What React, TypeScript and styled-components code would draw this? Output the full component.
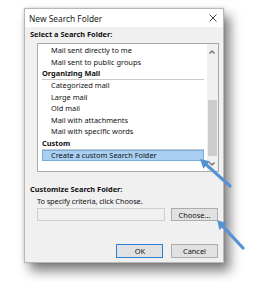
import React from "react";
import styled, { createGlobalStyle } from "styled-components";

const Global = createGlobalStyle`
  html, body { margin: 0; padding: 0; background: #ffffff; }
  body { font-family: "Noto Sans", "Open Sans", sans-serif; }
`;

const Page = styled.div`
  position: relative;
  width: 253px;
  height: 282px;
  padding: 8px 0 0 24px;
  box-sizing: border-box;
  overflow: hidden;
`;

const Dialog = styled.div`
  width: 200px;
  height: 255px;
  box-sizing: border-box;
  border: 1px solid #b8b8b8;
  background: #f0f0f0;
  box-shadow: 0 0 3px rgba(0, 0, 0, 0.18), 6px 8px 11px rgba(0, 0, 0, 0.5);
  display: flex;
  flex-direction: column;
  font-size: 7.4px;
  color: #111;
`;

const TitleBar = styled.div`
  height: 18px;
  background: #ffffff;
  display: flex;
  align-items: center;
  justify-content: space-between;
  padding: 0 4px 0 4px;
  font-size: 8.4px;
  color: #1a1a1a;
`;

const Close = styled.svg`
  width: 8px;
  height: 8px;
  margin-right: 2px;
`;

const Body = styled.div`
  flex: 1;
  display: flex;
  flex-direction: column;
  padding: 2px 4px 0 5px;
`;

const Label = styled.div<{ $mt?: number }>`
  font-weight: 700;
  height: 10px;
  line-height: 10px;
  margin-top: ${(p) => p.$mt ?? 0}px;
  color: #111;
`;

const Hint = styled.div`
  height: 10px;
  line-height: 10px;
  margin: 2px 0 0 7px;
  letter-spacing: -0.1px;
`;

const ListBox = styled.div`
  margin: 4px 0 0 7px;
  height: 129px;
  box-sizing: border-box;
  border: 1px solid #a9a9a9;
  background: #ffffff;
  display: flex;
  overflow: hidden;
`;

const Items = styled.div`
  flex: 1;
  padding: 1.3px 3px 0 4px;
  display: flex;
  flex-direction: column;
`;

const Row = styled.div<{ $kind: "item" | "header" | "selected" }>`
  height: 11.6px;
  line-height: 11px;
  box-sizing: border-box;
  padding-left: ${(p) => (p.$kind === "header" ? 0 : 9)}px;
  font-weight: ${(p) => (p.$kind === "header" ? 700 : 400)};
  border-bottom: ${(p) => (p.$kind === "header" ? "1px solid #c9c9c9" : "none")};
  background: ${(p) => (p.$kind === "selected" ? "#a9d0f2" : "transparent")};
  outline: ${(p) => (p.$kind === "selected" ? "1px solid #78aedd" : "none")};
  outline-offset: -1px;
  white-space: nowrap;
`;

const ScrollBar = styled.div`
  width: 11.5px;
  background: #f0f0f0;
  display: flex;
  flex-direction: column;
  align-items: stretch;
`;

const ScrollBtn = styled.div`
  height: 15px;
  display: flex;
  align-items: center;
  justify-content: center;
`;

const Track = styled.div`
  flex: 1;
  display: flex;
  flex-direction: column;
  padding: 41px 1px 0 1px;
`;

const Thumb = styled.div`
  flex: 1;
  background: #cdcdcd;
`;

const FieldRow = styled.div<{ $mt: number }>`
  display: flex;
  align-items: center;
  margin-top: ${(p) => p.$mt}px;
  padding-right: 1px;
`;

const TextField = styled.div`
  width: 128px;
  height: 13px;
  box-sizing: border-box;
  margin-left: 7px;
  border: 1px solid #cfcfcf;
  background: #f0f0f0;
`;

const Button = styled.button<{ $default?: boolean }>`
  width: 47px;
  height: 13.4px;
  box-sizing: border-box;
  padding: 0;
  margin-left: auto;
  font-family: inherit;
  font-size: 7.4px;
  line-height: 10px;
  color: #111;
  background: #e1e1e1;
  border: 1px solid ${(p) => (p.$default ? "#2a7fd4" : "#adadad")};
`;

const Buttons = styled.div`
  display: flex;
  justify-content: flex-end;
  gap: 7.7px;
  margin-top: 23px;
  padding-right: 1px;
  & > button { margin-left: 0; }
`;

const Arrows = styled.svg`
  position: absolute;
  left: 0;
  top: 0;
  pointer-events: none;
`;

const Arrow = ({ x1, y1, x2, y2 }: { x1: number; y1: number; x2: number; y2: number }) => {
  const dx = x2 - x1;
  const dy = y2 - y1;
  const len = Math.hypot(dx, dy);
  const ux = dx / len;
  const uy = dy / len;
  const hl = 9;
  const hw = 5;
  const bx = x2 - ux * hl;
  const by = y2 - uy * hl;
  const px = -uy;
  const py = ux;
  return (
    <g>
      <line x1={x1} y1={y1} x2={bx + ux} y2={by + uy} stroke="#5692d2" strokeWidth={3.2} strokeLinecap="round" />
      <polygon
        points={`${x2},${y2} ${bx + px * hw},${by + py * hw} ${bx - px * hw},${by - py * hw}`}
        fill="#5692d2"
      />
    </g>
  );
};

const rows: { text: string; kind: "item" | "header" | "selected" }[] = [
  { text: "Mail sent directly to me", kind: "item" },
  { text: "Mail sent to public groups", kind: "item" },
  { text: "Organizing Mail", kind: "header" },
  { text: "Categorized mail", kind: "item" },
  { text: "Large mail", kind: "item" },
  { text: "Old mail", kind: "item" },
  { text: "Mail with attachments", kind: "item" },
  { text: "Mail with specific words", kind: "item" },
  { text: "Custom", kind: "header" },
  { text: "Create a custom Search Folder", kind: "selected" },
];

export default function App() {
  return (
    <>
      <Global />
      <Page>
        <Dialog>
          <TitleBar>
            <span>New Search Folder</span>
            <Close viewBox="0 0 8 8">
              <path d="M0.5 0.5 L7.5 7.5 M7.5 0.5 L0.5 7.5" stroke="#333" strokeWidth="0.9" />
            </Close>
          </TitleBar>
          <Body>
            <Label>Select a Search Folder:</Label>
            <ListBox>
              <Items>
                {rows.map((r) => (
                  <Row key={r.text} $kind={r.kind}>
                    {r.text}
                  </Row>
                ))}
              </Items>
              <ScrollBar>
                <ScrollBtn>
                  <svg width="6" height="4" viewBox="0 0 6 4">
                    <path d="M0.5 3.5 L3 1 L5.5 3.5" stroke="#606060" strokeWidth="1.1" fill="none" />
                  </svg>
                </ScrollBtn>
                <Track>
                  <Thumb />
                </Track>
                <ScrollBtn>
                  <svg width="6" height="4" viewBox="0 0 6 4">
                    <path d="M0.5 0.5 L3 3 L5.5 0.5" stroke="#606060" strokeWidth="1.1" fill="none" />
                  </svg>
                </ScrollBtn>
              </ScrollBar>
            </ListBox>
            <Label $mt={12}>Customize Search Folder:</Label>
            <Hint>To specify criteria, click Choose.</Hint>
            <FieldRow $mt={2}>
              <TextField />
              <Button>Choose...</Button>
            </FieldRow>
            <Buttons>
              <Button $default>OK</Button>
              <Button>Cancel</Button>
            </Buttons>
          </Body>
        </Dialog>
        <Arrows width="253" height="282" viewBox="0 0 253 282">
          <Arrow x1={230} y1={186} x2={200} y2={159} />
          <Arrow x1={243} y1={248} x2={217} y2={220} />
        </Arrows>
      </Page>
    </>
  );
}
